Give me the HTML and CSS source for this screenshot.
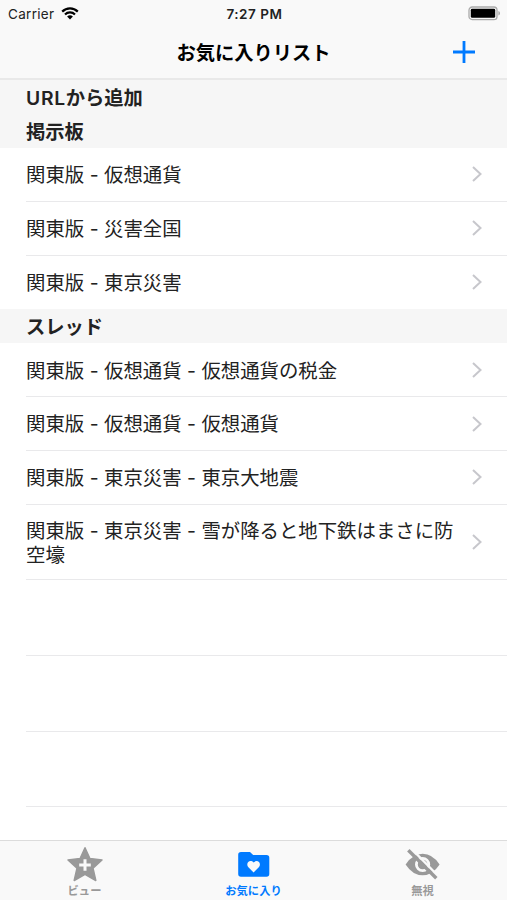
FILE: index.html
```html
<!DOCTYPE html>
<html lang="ja">
<head>
  <meta charset="UTF-8" />
  <meta name="viewport" content="width=device-width, initial-scale=1" />
  <title>お気に入りリスト</title>
  <link rel="stylesheet" href="styles.css">
</head>
<body>

  <!-- HEADER -->
  <header>
    <div class="statusBar">
      <div class="carrier">
        <span>Carrier</span>
        <svg class="wifi" viewBox="0 0 18 13">
          <path d="M1.2 4.6 A11 11 0 0 1 16.8 4.6" />
          <path d="M4 7.5 A7.1 7.1 0 0 1 14 7.5" />
          <path class="dot" d="M6.1 9.6 A4.1 4.1 0 0 1 11.9 9.6 L9 12.6 Z" />
        </svg>
      </div>
      <div class="time">7:27 PM</div>
      <svg class="battery" viewBox="0 0 33 15">
        <rect class="case" x="1" y="1" width="28" height="12.6" rx="3.2" />
        <rect x="2.8" y="2.8" width="24.4" height="9" rx="1.4" />
        <path class="tip" d="M30.4 5 Q32 5.5 32 7.3 Q32 9.1 30.4 9.6 Z" />
      </svg>
    </div>
    <div class="navBar">
      <h1>お気に入りリスト</h1>
      <svg class="addBtn" viewBox="0 0 22 22"><path d="M11 0V22M0 11H22" /></svg>
    </div>
  </header>

  <!-- FAVORITES -->
  <main>
    <h2><span class="latin">URL</span>から追加</h2>
    <h2>掲示板</h2>
    <ul>
      <li><span>関東版 - 仮想通貨</span><svg class="chevron" viewBox="0 0 10 16"><path d="M1 1L8.5 8L1 15" /></svg></li>
      <li><span>関東版 - 災害全国</span><svg class="chevron" viewBox="0 0 10 16"><path d="M1 1L8.5 8L1 15" /></svg></li>
      <li><span>関東版 - 東京災害</span><svg class="chevron" viewBox="0 0 10 16"><path d="M1 1L8.5 8L1 15" /></svg></li>
    </ul>
    <h2>スレッド</h2>
    <ul class="threads">
      <li><span>関東版 - 仮想通貨 - 仮想通貨の税金</span><svg class="chevron" viewBox="0 0 10 16"><path d="M1 1L8.5 8L1 15" /></svg></li>
      <li><span>関東版 - 仮想通貨 - 仮想通貨</span><svg class="chevron" viewBox="0 0 10 16"><path d="M1 1L8.5 8L1 15" /></svg></li>
      <li><span>関東版 - 東京災害 - 東京大地震</span><svg class="chevron" viewBox="0 0 10 16"><path d="M1 1L8.5 8L1 15" /></svg></li>
      <li class="tall"><span>関東版 - 東京災害 - 雪が降ると地下鉄はまさに防空壕</span><svg class="chevron" viewBox="0 0 10 16"><path d="M1 1L8.5 8L1 15" /></svg></li>
      <li class="tall"></li>
      <li class="tall"></li>
      <li class="tall"></li>
    </ul>
  </main>

  <!-- TAB BAR -->
  <nav>
    <div class="tab">
      <svg viewBox="0 0 38 38">
        <path class="fill" d="M19 2.8L23.9 13.6L36 14.9L27 23.1L29.8 35.5L19 29.4L8.2 35.5L11 23.1L2 14.9L14.1 13.6Z" />
        <path class="cutLine" d="M19 14.2V25.8M13.2 20H24.8" />
      </svg>
      <span>ビュー</span>
    </div>
    <div class="tab active">
      <svg viewBox="0 0 38 38">
        <path class="solid" d="M6 7H15L18.2 10H31.5Q34.3 10 34.3 12.8V29Q34.3 31.8 31.5 31.8H6Q3.2 31.8 3.2 29V9.8Q3.2 7 6 7Z" />
        <path class="cut" d="M18.6 27.5L13.4 22.3C10 18 15.1 13.8 18.6 17.6C22.1 13.8 27.2 18 23.8 22.3Z" />
      </svg>
      <span>お気に入り</span>
    </div>
    <div class="tab">
      <svg viewBox="0 0 38 38">
        <path class="solid" d="M1.6 19.5Q8.5 8.7 18.6 8.7T35.6 19.5Q28.5 30.3 18.6 30.3T1.6 19.5Z" />
        <circle class="ring" cx="18.6" cy="19.5" r="6.2" />
        <path class="cutSlash" d="M6.8 3.2L34 30.8" />
        <path class="slash" d="M4.3 5.3L32.3 33.3" />
      </svg>
      <span>無視</span>
    </div>
  </nav>

</body>
</html>
```
FILE: styles.css
```css
/* RESET */
* {
  margin: 0;
  padding: 0;
  box-sizing: border-box;
}

body {
  display: flex;
  flex-direction: column;
  height: 100vh;
  overflow: hidden;
  background-color: #fff;
  font-family: Inter, "Noto Sans CJK JP", sans-serif;
  color: #222;
}

/* HEADER */
header {
  height: 80px;
  flex-shrink: 0;
  background-color: #f9f9f9;
  border-bottom: 2px solid #e9e9e9;
}
.statusBar {
  display: grid;
  grid-template-columns: 1fr auto 1fr;
  align-items: center;
  height: 27px;
  padding: 0 6px 0 8px;
  font-size: 13.5px;
}
.carrier {
  display: flex;
  align-items: center;
  gap: 7px;
  letter-spacing: 0.3px;
}
.wifi {
  width: 18px;
  height: 13px;
  fill: none;
  stroke: #000;
  stroke-width: 2.2;
}
.wifi .dot {
  fill: #000;
  stroke: none;
}
.time {
  font-size: 13.5px;
  font-weight: 600;
  letter-spacing: 0.55px;
}
.battery {
  width: 33px;
  height: 15px;
  justify-self: end;
}
.battery .case {
  fill: none;
  stroke: #aaa;
  stroke-width: 1.3;
}
.battery .tip {
  fill: #aaa;
}

.navBar {
  display: grid;
  grid-template-columns: 1fr auto 1fr;
  align-items: center;
  height: 50px;
  padding-right: 32px;
  padding-left: 32px;
}
h1 {
  grid-column: 2;
  padding-top: 2px;
  font-size: 19.3px;
  font-weight: 700;
  line-height: 48px;
  color: #000;
}
.addBtn {
  width: 22px;
  height: 22px;
  justify-self: end;
  stroke: #007aff;
  stroke-width: 2.8;
}

/* LIST */
main {
  flex: 1;
  min-height: 0;
  overflow: hidden;
}
h2 {
  height: 34px;
  padding-top: 1px;
  padding-left: 26px;
  background-color: #f6f6f6;
  font-size: 19.3px;
  font-weight: 600;
  line-height: 34px;
}
h2 .latin {
  letter-spacing: 0.7px;
}
ul {
  list-style: none;
}
li {
  display: flex;
  align-items: center;
  justify-content: space-between;
  height: 53.8px;
  margin-left: 26px;
  padding-right: 25px;
  border-bottom: 1px solid #e9e9eb;
  font-size: 19.4px;
  line-height: 24.5px;
}
ul:not(.threads) li:last-child {
  border-bottom: none;
}
li.tall {
  height: 75.6px;
}
li span {
  width: 430px;
  padding-top: 2px;
}
.chevron {
  width: 10px;
  height: 16px;
  flex-shrink: 0;
  fill: none;
  stroke: #c7c7cc;
  stroke-width: 2;
}

/* TAB BAR */
nav {
  display: grid;
  grid-template-columns: repeat(3, 1fr);
  height: 60px;
  flex-shrink: 0;
  background-color: #f9f9f9;
  border-top: 1px solid #dcdcdc;
}
.tab {
  display: flex;
  flex-direction: column;
  align-items: center;
  padding-top: 4px;
  font-size: 11.3px;
  font-weight: 600;
  line-height: 14px;
  color: #999;
}
.tab.active {
  color: #007aff;
}
.tab span {
  margin-top: 1px;
}
.tab svg {
  width: 38px;
  height: 38px;
  flex-shrink: 0;
  fill: none;
}
.tab .solid {
  fill: currentColor;
}
.tab .fill {
  fill: currentColor;
  stroke: currentColor;
  stroke-width: 1.5;
  stroke-linejoin: round;
}
.tab .cut {
  fill: #f9f9f9;
}
.tab .cutLine {
  stroke: #f9f9f9;
  stroke-width: 3;
}
.tab .ring {
  stroke: #f9f9f9;
  stroke-width: 2.8;
}
.tab .cutSlash {
  stroke: #f9f9f9;
  stroke-width: 2.4;
}
.tab .slash {
  stroke: currentColor;
  stroke-width: 3.4;
}
```
